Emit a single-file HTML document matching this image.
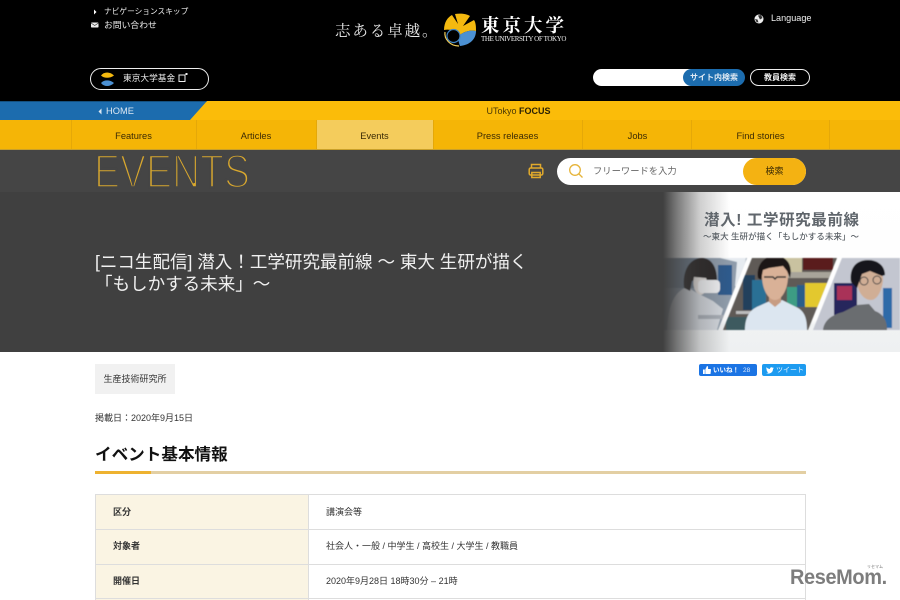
<!DOCTYPE html>
<html lang="ja"><head><meta charset="utf-8"><title>EVENTS</title>
<style>
html,body{margin:0;padding:0;width:900px;height:600px;overflow:hidden;background:#fff}
body{position:relative;font-family:"Liberation Sans","Noto Sans CJK JP",sans-serif;color:#222}
.a{position:absolute;white-space:nowrap;line-height:1}
.b{position:absolute}
.nav{position:absolute;top:130.5px;font-size:9.3px;color:#3a2a05;transform:translateX(-50%);white-space:nowrap;line-height:1.1}
.dv{position:absolute;top:120px;width:1px;height:29px;background:#e5a808}
</style></head><body>
<!-- header -->
<div class="b" style="left:0;top:0;width:900px;height:101px;background:#000"></div>
<svg class="b" style="left:90px;top:8px" width="12" height="24" viewBox="0 0 12 24"><path d="M4 1.500L6.500 4 4 6.500z" fill="#fff"/><rect x="1" y="14.500" width="7.500" height="5" rx=".8" fill="#eee"/><path d="M1 15l3.700 2.500L8.500 15" stroke="#333" stroke-width=".7" fill="none"/></svg>
<div class="a" style="left:104px;top:8px;font-size:7.700px;color:#eee">ナビゲーションスキップ</div>
<div class="a" style="left:104px;top:21px;font-size:8.800px;color:#eee">お問い合わせ</div>
<!-- logo -->
<div class="a" style="left:335px;top:24px;font-size:15.500px;color:#e8e8e8;letter-spacing:1.900px;font-family:'Liberation Serif','Noto Serif CJK SC',serif">志ある卓越。</div>
<svg class="b" style="left:443px;top:13px" width="34" height="34" viewBox="0 0 34 34">
<path d="M1 17C1 9 5 4 9 2L15 11 12 1C18 0 24 1 27 3L20 13 31 7C33 10 33 14 33 18 28 17 22 18 17 22 12 17 6 16 1 17z" fill="#f4b90f"/>
<path d="M33 18C33 26 27 32 17 33 15 28 15 24 17 22 22 18 28 17 33 18z" fill="#4b90d2"/>
<circle cx="10.500" cy="23" r="6.500" fill="#000" stroke="#3f83c3" stroke-width="1.200"/>
<path d="M2 19C1 26 7 33 16 33" stroke="#f4cf5a" stroke-width="1.200" fill="none"/></svg>
<div class="a" style="left:481px;top:17.500px;font-size:18.500px;color:#fff;letter-spacing:3px;font-weight:700;font-family:'Liberation Serif','Noto Serif CJK SC',serif">東京大学</div>
<div class="a" style="left:481px;top:36px;font-size:7px;color:#f0f0f0;font-family:'Liberation Serif',serif;letter-spacing:-.38px">THE UNIVERSITY OF TOKYO</div>
<!-- language -->
<svg class="b" style="left:754px;top:14px" width="10" height="10" viewBox="0 0 10 10"><circle cx="5" cy="5" r="4.500" fill="#eee"/><path d="M4 1.500L7 1l1.500 3-2.500 1.500zM1 5l2.500.5L4.500 8.500 2.500 8z" fill="#333"/></svg>
<div class="a" style="left:771px;top:14px;font-size:9.100px;color:#eee">Language</div>
<!-- fund button -->
<div class="b" style="left:90px;top:68px;width:117px;height:20px;border:1px solid #eee;border-radius:12px;background:#000"></div>
<svg class="b" style="left:100px;top:71px" width="16" height="17" viewBox="0 0 16 17"><path d="M1 4.500C4 .5 10 .5 14 4.500 10 7.500 4 7.500 1 4.500z" fill="#f4b90f"/><path d="M1 12C4 8.500 10 8.500 14 12 10 16 4 16 1 12z" fill="#4b90d2"/></svg>
<div class="a" style="left:123px;top:74px;font-size:8.700px;color:#eee">東京大学基金</div>
<svg class="b" style="left:178px;top:73px" width="10" height="10" viewBox="0 0 10 10"><rect x="1" y="2" width="6" height="6.500" fill="none" stroke="#eee" stroke-width="1"/><rect x="7.500" y="0" width="2" height="2" fill="#eee"/></svg>
<!-- search -->
<div class="b" style="left:593px;top:69px;width:110px;height:17px;background:#fff;border-radius:9px 0 0 9px"></div>
<div class="b" style="left:683px;top:69px;width:62px;height:17px;background:#1c6cae;border-radius:9px;color:#dfe9f3;font-size:8px;font-weight:700;text-align:center;line-height:17px">サイト内検索</div>
<div class="b" style="left:750px;top:69px;width:58px;height:15px;border:1px solid #eee;border-radius:9px;color:#eee;font-size:8px;font-weight:700;text-align:center;line-height:15.500px">教員検索</div>
<!-- yellow bars -->
<div class="b" style="left:0;top:101px;width:900px;height:19px;background:#fbbc09"></div>
<svg class="b" style="left:0;top:101px" width="208" height="19"><path d="M0 0H207L190 19H0z" fill="#1c6cae"/><path d="M0 0H207L206 1H0z" fill="#14507f"/></svg>
<svg class="b" style="left:98px;top:108px" width="5" height="7"><path d="M3.500 .5v6L.5 3.500z" fill="#dde8f2"/></svg>
<div class="a" style="left:106px;top:106.500px;font-size:9.300px;color:#dde8f2">HOME</div>
<div class="a" style="left:486.500px;top:106.500px;font-size:9px;color:#4a3805">UTokyo <b style="color:#2b2205">FOCUS</b></div>
<div class="b" style="left:0;top:120px;width:900px;height:29px;background:#f5b506"></div>
<div class="b" style="left:0;top:149px;width:900px;height:1px;background:#c9a02a"></div>
<div class="b" style="left:317px;top:120px;width:116px;height:29px;background:#f4cc5c"></div>
<div class="dv" style="left:71px"></div><div class="dv" style="left:196px"></div><div class="dv" style="left:316px"></div><div class="dv" style="left:433px"></div><div class="dv" style="left:582px"></div><div class="dv" style="left:691px"></div><div class="dv" style="left:829px"></div>
<div class="nav" style="left:133.500px">Features</div><div class="nav" style="left:256px">Articles</div><div class="nav" style="left:374.500px">Events</div><div class="nav" style="left:507.500px">Press releases</div><div class="nav" style="left:637.500px">Jobs</div><div class="nav" style="left:760.500px">Find stories</div>
<!-- events band -->
<div class="b" style="left:0;top:150px;width:900px;height:42px;background:#454545"></div>
<svg class="b" style="left:90px;top:150px" width="170" height="42"><text x="4" y="37.500" font-family="'Liberation Sans',sans-serif" font-size="47" textLength="156" lengthAdjust="spacingAndGlyphs" fill="#d9a82e" stroke="#454545" stroke-width="2.600">EVENTS</text></svg>
<svg class="b" style="left:528px;top:163px" width="16" height="16" viewBox="0 0 16 16" fill="none" stroke="#e0a92c" stroke-width="1.500"><path d="M3.500 5V1.500h9V5"/><rect x="1.200" y="5" width="13.600" height="7" rx="1.500"/><rect x="3.800" y="9.500" width="8.400" height="5"/></svg>
<div class="b" style="left:557px;top:158px;width:249px;height:27px;background:#fff;border-radius:14px"></div>
<div class="b" style="left:743px;top:158px;width:63px;height:27px;background:#f4b212;border-radius:14px;font-size:9px;color:#3a2a05;text-align:center;line-height:27px">検索</div>
<svg class="b" style="left:568px;top:163px" width="16" height="16" viewBox="0 0 16 16" fill="none" stroke="#e6b43a" stroke-width="1.300"><circle cx="7" cy="7" r="5.300"/><path d="M11 11l3.500 3.500"/></svg>
<div class="a" style="left:593px;top:167px;font-size:9.300px;color:#666">フリーワードを入力</div>
<!-- hero -->
<div class="b" style="left:0;top:192px;width:900px;height:160px;background:#404040"></div>
<svg class="b" style="left:660px;top:192px" width="240" height="160" viewBox="0 0 240 160">
<defs>
<linearGradient id="o" x1="0" x2="1" y1="0" y2="0"><stop offset="0.0125" stop-color="#404040" stop-opacity="1"/><stop offset=".07" stop-color="#404040" stop-opacity=".7"/><stop offset=".167" stop-color="#404040" stop-opacity=".25"/><stop offset=".29" stop-color="#404040" stop-opacity="0"/></linearGradient>
<linearGradient id="w" x1="0" x2="0" y1="0" y2="1"><stop offset="0" stop-color="#fff"/><stop offset=".8" stop-color="#fdfdfd"/><stop offset=".83" stop-color="#f0f2f3"/><stop offset="1" stop-color="#eef0f1"/></linearGradient>
<clipPath id="p1"><path d="M0 66H87L58 138H0z"/></clipPath>
<clipPath id="p2"><path d="M92 66H177L148 138H63z"/></clipPath>
<clipPath id="p3"><path d="M182 66H240V138H153z"/></clipPath>
<filter id="bl" x="-5%" y="-5%" width="110%" height="110%"><feGaussianBlur stdDeviation=".6"/></filter>
</defs>
<rect width="240" height="160" fill="url(#w)"/>
<g filter="url(#bl)">
<!-- panel 1 -->
<g clip-path="url(#p1)">
<rect x="0" y="66" width="90" height="72" fill="#8f9cab"/>
<rect x="0" y="66" width="40" height="30" fill="#6f7f90"/>
<path d="M60 66h26l-6 30-5-2 2-24z" fill="#e6ebf0"/>
<rect x="58" y="73" width="14" height="30" fill="#2f5a8c"/>
<path d="M7 138c1-22 6-38 20-43l10 6 16 8 10 8-6 21z" fill="#d6dae0"/>
<path d="M24 96c-2-18 6-30 18-30 10 0 15 10 15 22l-6 5-9-7-10 3-2 10z" fill="#2a2628"/>
<path d="M34 85l12 1c3 6 1 15-5 17-6-1-9-9-7-18z" fill="#e4dfdc"/>
<rect x="38" y="88" width="22" height="13" rx="4" fill="#f2f3f5"/>
<rect x="38" y="123" width="26" height="4" fill="#aab0b8"/>
</g>
<!-- panel 2 -->
<g clip-path="url(#p2)">
<rect x="60" y="66" width="120" height="72" fill="#5e5a56"/>
<rect x="123" y="66" width="19" height="14" fill="#c9c2a0"/>
<rect x="143" y="66" width="30" height="12" fill="#5a1d1c"/>
<rect x="126" y="80" width="50" height="6" fill="#a8a49a"/>
<rect x="83" y="83" width="12" height="35" fill="#243f5c"/><rect x="92" y="88" width="14" height="30" fill="#2c6f95"/>
<rect x="127" y="95" width="18" height="20" fill="#3e9c84"/><rect x="137" y="93" width="8" height="22" fill="#2a5d8a"/><rect x="145" y="91" width="22" height="24" fill="#e3c82f"/>
<rect x="76" y="119" width="36" height="3" fill="#bbb"/><rect x="66" y="125" width="28" height="13" fill="#3e5a5e"/>
<path d="M85 138c0-12 4-20 14-24l11-5 6 2 6-3 14 7c9 4 11 12 11 23z" fill="#dce6f0"/>
<path d="M109 100h12v10l-6 5-6-5z" fill="#c79c82"/>
<path d="M102 84c0-10 5-15 13-15s13 6 13 15c0 13-6 24-13 24-7 0-13-11-13-24z" fill="#d9b197"/>
<path d="M98 86c-2-12 5-22 17-22 12 0 18 9 15 22l-3-7-4-5-14 2-6 2-2 10z" fill="#1a1715"/>
<path d="M104 85h9l2 2 2-2h9" stroke="#333" stroke-width="1.500" fill="none"/>
</g>
<!-- panel 3 -->
<g clip-path="url(#p3)">
<rect x="150" y="66" width="90" height="72" fill="#c3c6d0"/>
<rect x="174" y="91" width="23" height="32" fill="#27275c"/><rect x="177" y="94" width="15" height="14" fill="#a93258"/>
<rect x="223" y="96" width="9" height="40" fill="#2e6aa8"/>
<path d="M163 138c1-9 8-15 20-18l14-7 12-1 6 7c8 3 12 9 12 19z" fill="#6b6d6f"/>
<path d="M197 88c0-10 6-15 13-15 8 0 13 7 13 15-1 11-6 20-12 20-8 0-14-9-14-20z" fill="#d0ae95"/>
<path d="M191 90c-2-15 6-22 17-22 10 0 17 6 17 15l-3 1-12-5-8 3-5 14z" fill="#16171a"/>
<circle cx="204" cy="89" r="4" fill="none" stroke="#444" stroke-width="1"/><circle cx="217" cy="88" r="4" fill="none" stroke="#444" stroke-width="1"/>
</g>
</g>
<rect x="0" y="0" width="240" height="160" fill="url(#o)"/>
<text x="44" y="33" font-size="15.500" font-weight="700" fill="#60666c" font-family="'Liberation Sans','Noto Sans CJK JP',sans-serif" textLength="155" lengthAdjust="spacing">潜入! 工学研究最前線</text>
<text x="43" y="47.500" font-size="8.500" font-weight="500" fill="#5a6066" font-family="'Liberation Sans','Noto Sans CJK JP',sans-serif" textLength="156" lengthAdjust="spacing">〜東大 生研が描く「もしかする未来」〜</text>
</svg>
<div class="a" style="left:95px;top:250.500px;font-size:17.550px;color:#f0f0f0;line-height:22px;white-space:normal;width:450px">[ニコ生配信] 潜入！工学研究最前線 〜 東大 生研が描く<br>「もしかする未来」〜</div>
<!-- content -->
<div class="b" style="left:95px;top:364px;width:80px;height:30px;background:#f1f1f1;font-size:9px;color:#333;line-height:30px;text-align:center">生産技術研究所</div>
<div class="b" style="left:699px;top:364px;width:58px;height:12px;background:#1b74e4;border-radius:2px;color:#dbe8fa;font-size:6.500px;line-height:12px;white-space:nowrap"><svg style="position:absolute;left:4px;top:2px" width="8" height="8" viewBox="0 0 8 8"><path d="M0 3.500h1.800V8H0zM2.300 3.500L4 0c1 0 1.300 1 1 3h2.500c.6 0 .5 1 0 5H2.300z" fill="#fff"/></svg><b style="position:absolute;left:14px;top:1px;color:#fff">いいね！</b><span style="position:absolute;left:44px;top:1px">28</span></div>
<div class="b" style="left:762px;top:364px;width:44px;height:12px;background:#1d9bf0;border-radius:2px;color:#e8f4fd;font-size:7px;line-height:12px;white-space:nowrap"><svg style="position:absolute;left:4px;top:2.500px" width="8" height="7" viewBox="0 0 8 7"><path d="M0 6c3 1.500 7 0 7-4l1-1-1 .2L7.600.3 6.700.7C5.500-.4 3.800.5 4 2 2.500 2 1.200 1.200.5.300.1 1.200.3 2 1 2.700L.4 2.500c0 .8.500 1.400 1.200 1.700H1c.2.700.800 1 1.400 1C1.800 5.700 1 6 0 6z" fill="#fff"/></svg><span style="position:absolute;left:14px;top:.5px">ツイート</span></div>
<div class="a" style="left:95px;top:414px;font-size:9px;color:#333">掲載日：2020年9月15日</div>
<div class="a" style="left:95px;top:446.500px;font-size:16.600px;font-weight:700;color:#111">イベント基本情報</div>
<div class="b" style="left:95px;top:471px;width:711px;height:3px;background:#e3cfa3"></div>
<div class="b" style="left:95px;top:471px;width:56px;height:3px;background:#eeb230"></div>
<!-- table -->
<div class="b" style="left:95px;top:494px;width:711px;height:106px;border:solid #ddd;border-width:1px 1px 0 1px;box-sizing:border-box;background:#fff"></div>
<div class="b" style="left:96px;top:495px;width:212px;height:105px;background:#faf4e3"></div>
<div class="b" style="left:308px;top:495px;width:1px;height:105px;background:#ddd"></div>
<div class="b" style="left:96px;top:529px;width:709px;height:1px;background:#ddd"></div>
<div class="b" style="left:96px;top:564px;width:709px;height:1px;background:#ddd"></div>
<div class="b" style="left:96px;top:598px;width:709px;height:1px;background:#ddd"></div>
<div class="a" style="left:113px;top:507.500px;font-size:9px;font-weight:700;color:#333">区分</div>
<div class="a" style="left:113px;top:541.500px;font-size:9px;font-weight:700;color:#333">対象者</div>
<div class="a" style="left:113px;top:576.500px;font-size:9px;font-weight:700;color:#333">開催日</div>
<div class="a" style="left:326px;top:507.500px;font-size:9px;color:#333">講演会等</div>
<div class="a" style="left:326px;top:541.500px;font-size:9px;color:#333">社会人・一般 / 中学生 / 高校生 / 大学生 / 教職員</div>
<div class="a" style="left:326px;top:576.500px;font-size:9px;color:#333">2020年9月28日 18時30分 – 21時</div>
<!-- watermark -->
<div class="a" style="left:790px;top:567px;font-size:21px;font-weight:700;color:#7d7d7d;letter-spacing:-.4px;transform-origin:left top;transform:scaleX(.95)">ReseMom.</div>
<div class="a" style="left:867px;top:565px;font-size:4px;color:#777">リセマム</div>
</body></html>
